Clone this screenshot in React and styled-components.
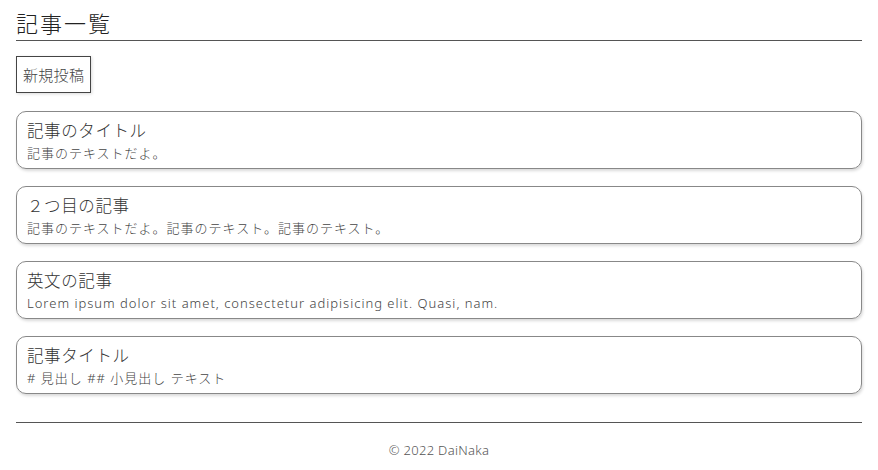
import React from 'react'
import styled, { createGlobalStyle } from 'styled-components'

const articles = [
  { id: 1, title: '記事のタイトル', body: '記事のテキストだよ。' },
  { id: 2, title: '２つ目の記事', body: '記事のテキストだよ。記事のテキスト。記事のテキスト。' },
  { id: 3, title: '英文の記事', body: 'Lorem ipsum dolor sit amet, consectetur adipisicing elit. Quasi, nam.' },
  { id: 4, title: '記事タイトル', body: '# 見出し ## 小見出し テキスト' },
]

const GlobalStyle = createGlobalStyle`
  body {
    margin: 0;
    background: #fff;
    color: #333;
    font-family: "Noto Sans", "Noto Sans CJK JP", sans-serif;
    font-weight: 300;
  }
`

const App = () => {
  return (
    <>
      <GlobalStyle />
      <Page>
        <Heading>記事一覧</Heading>
        <NewButton>新規投稿</NewButton>
        <ArticleList>
          {articles.map(article => (
            <ArticleCard key={article.id}>
              <ArticleTitle>{article.title}</ArticleTitle>
              <ArticleBody>{article.body}</ArticleBody>
            </ArticleCard>
          ))}
        </ArticleList>
        <Footer>© 2022 DaiNaka</Footer>
      </Page>
    </>
  )
}

const Page = styled.div`
  padding: 0 16px;
  display: flex;
  flex-direction: column;
  align-items: stretch;
`

const Heading = styled.h1`
  margin: 8px 0 0;
  padding-bottom: 2px;
  font-size: 22px;
  font-weight: 300;
  letter-spacing: 2px;
  color: #222;
  line-height: 30px;
  border-bottom: 1px solid #555;
`

const NewButton = styled.button`
  align-self: flex-start;
  margin-top: 15px;
  height: 37px;
  padding: 0 6px;
  background: #fff;
  border: 1px solid #444;
  box-shadow: 1px 1px 3px rgba(0, 0, 0, 0.15);
  font-family: inherit;
  font-weight: 300;
  font-size: 15px;
  letter-spacing: 0.3px;
  color: #444;
  cursor: pointer;
`

const ArticleList = styled.div`
  display: flex;
  flex-direction: column;
  gap: 17px;
  margin-top: 18px;
`

const ArticleCard = styled.div`
  height: 58px;
  box-sizing: border-box;
  padding: 7px 10px;
  border: 1px solid #888;
  border-radius: 10px;
  box-shadow: 1px 2px 3px rgba(0, 0, 0, 0.15);
`

const ArticleTitle = styled.h2`
  margin: 0 0 1px;
  font-size: 16.5px;
  font-weight: 300;
  line-height: 24px;
  letter-spacing: 0.6px;
  color: #333;
`

const ArticleBody = styled.p`
  margin: 0;
  font-size: 13px;
  line-height: 18px;
  letter-spacing: 1px;
  color: #444;
`

const Footer = styled.footer`
  margin-top: 28px;
  border-top: 1px solid #555;
  padding-top: 18px;
  text-align: center;
  font-size: 13px;
  letter-spacing: 0.3px;
  color: #555;
`

export default App
